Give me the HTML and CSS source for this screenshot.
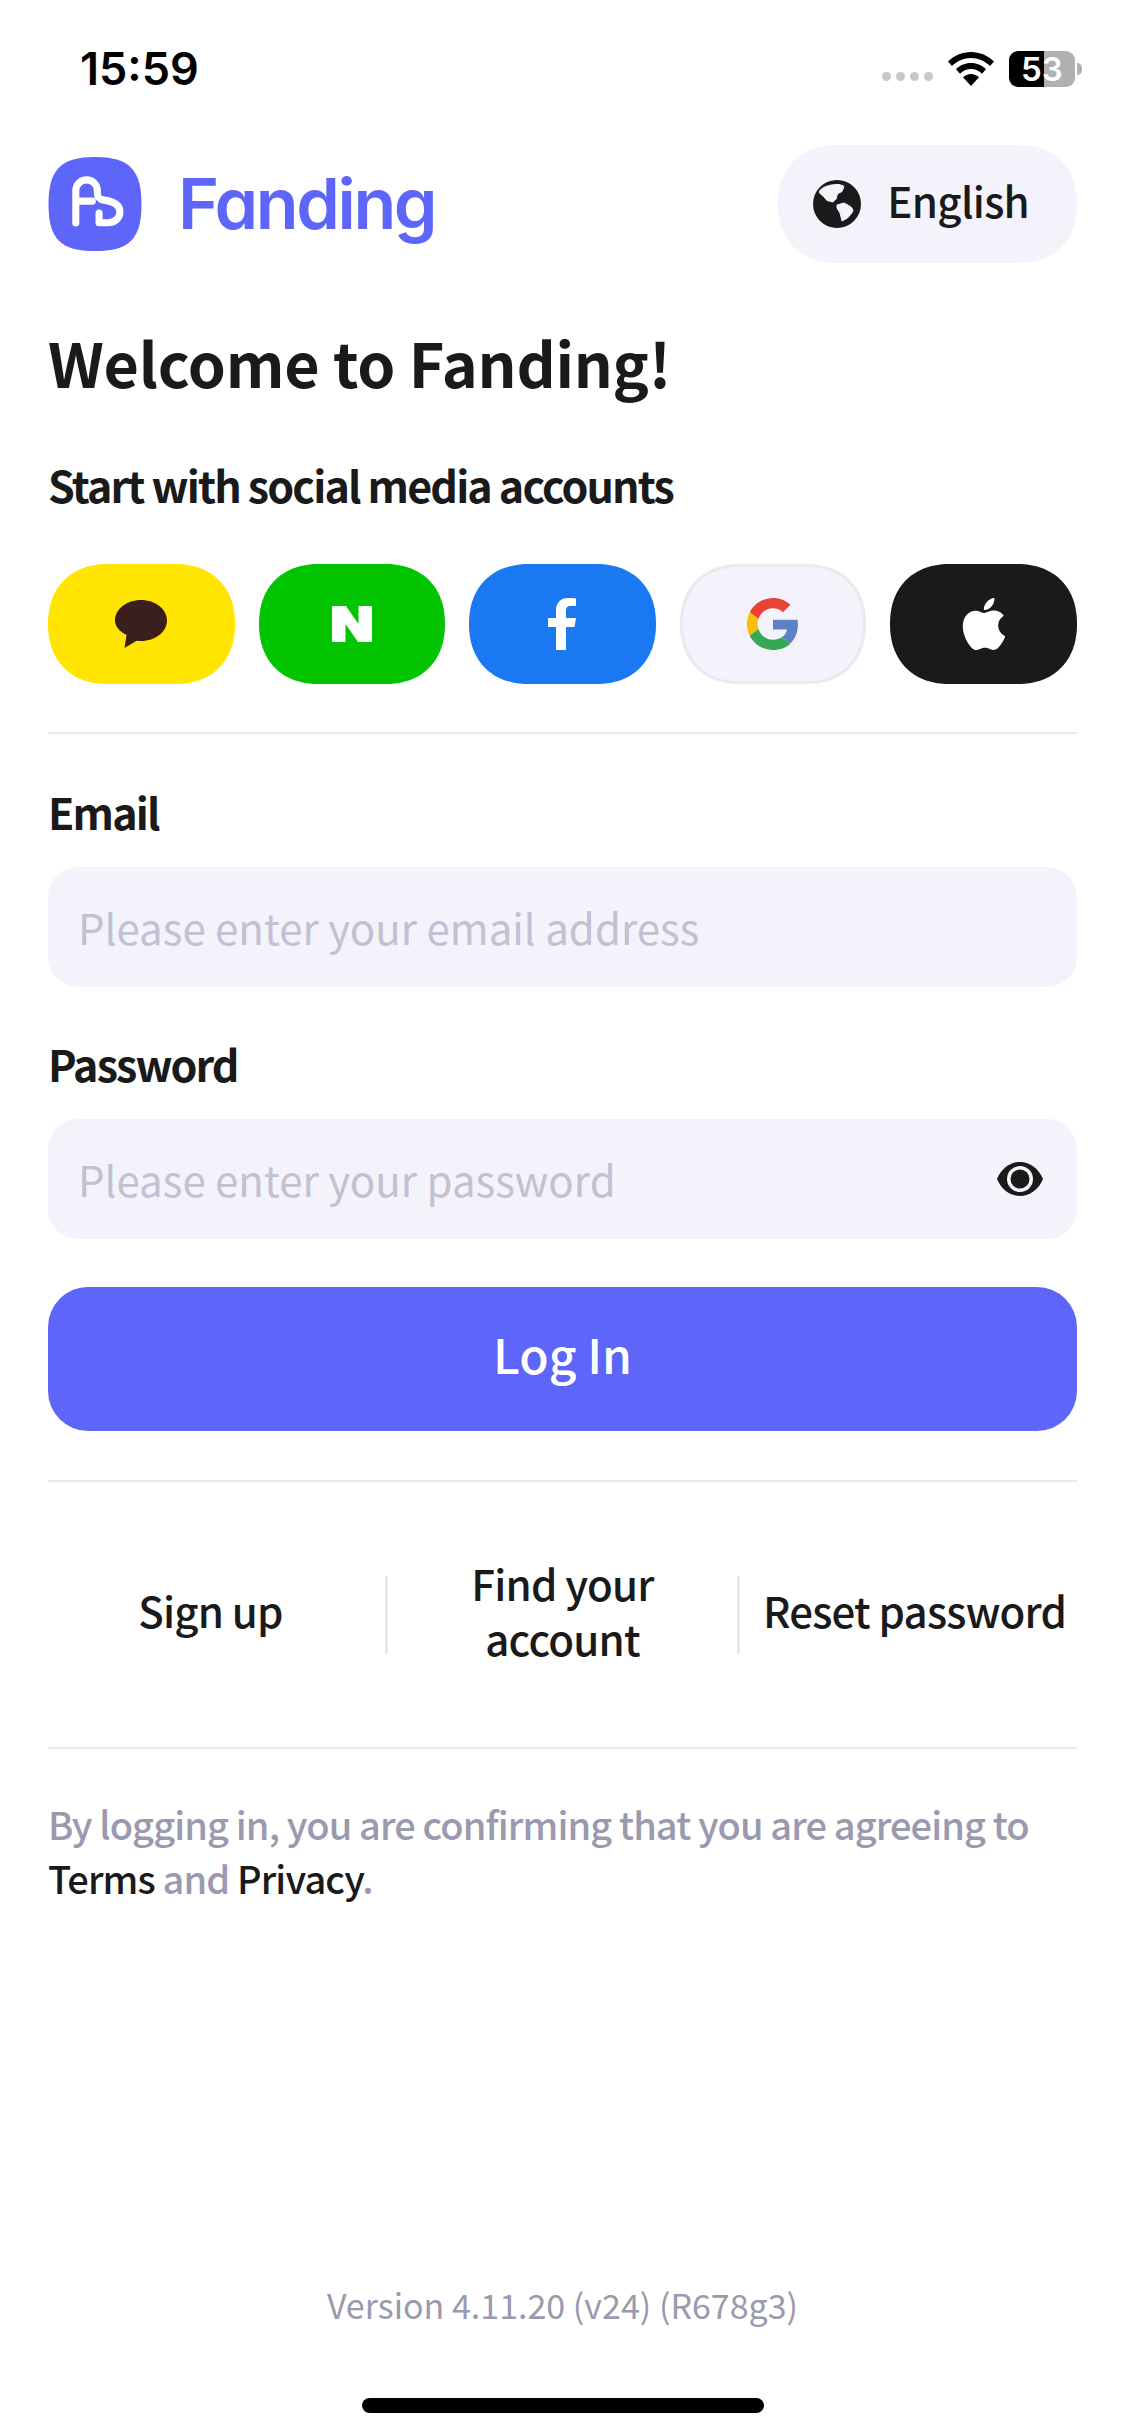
FILE: index.html
```html
<!DOCTYPE html>
<html lang="en">
<head>
    <meta charset="UTF-8">
    <meta name="viewport" content="width=device-width, initial-scale=1.0">
    <title>Fanding</title>
    <link rel="stylesheet" href="styles.css">
</head>
<body>

<div class="screen">
    <div class="status-bar">
        <span class="time">15:59</span>
        <div class="status-icons">
            <div class="signal"><i></i><i></i><i></i><i></i></div>
            <svg class="wifi" viewBox="0 0 46 34"><path d="M23 0C14 0 6 3.600 0 9.500l4 4.500C9 9 15.700 6 23 6s14 3 19 8l4-4.500C40 3.600 32 0 23 0z"/><path d="M23 11c-6 0-11.300 2.400-15 6.200l4 4.500C14.800 18.800 18.700 17 23 17s8.200 1.800 11 4.700l4-4.500C34.300 13.400 29 11 23 11z"/><path d="M23 22c-3.200 0-6 1.300-8 3.300L23 34l8-8.700C29 23.300 26.200 22 23 22z"/></svg>
            <div class="battery">53</div>
            <div class="battery-nub"></div>
        </div>
    </div>

    <div class="topbar">
        <div class="brand">
            <svg class="brand-mark" viewBox="60 52 276 279">
                <path fill="#5e65f9" d="M198 52C300 52 336 90 336 192C336 295 300 331 198 331C96 331 60 295 60 192C60 90 96 52 198 52Z"/>
                <path fill="none" stroke="#fff" stroke-width="21" stroke-linecap="round" stroke-linejoin="round" d="M141 248V152A32 32 0 0 1 205 152V160C205 172 212 178 226 180C254 184 272 196 272 215C272 234 256 247 236 247H210V218M141 183H190"/>
            </svg>
            <span class="brand-name">Fanding</span>
        </div>
        <div class="lang-button">
            <svg class="globe" viewBox="0 0 48 48">
                <circle cx="24" cy="24" r="24" fill="#1a1a1a"/>
                <path fill="#f4f3fc" stroke="#f4f3fc" stroke-width="1" stroke-linejoin="round" d="M6.500 11C8 9 10.500 7.500 13 6.500C17 5 22 4.200 26 4.500C28 5 30 5.500 31 6.500L29 11.500L25 13.500C23.500 15 24 17.500 23 19L20 22L14 20.500L10.500 16.500L6.500 13zM24 25L31 23C34 24.500 37 26 39 28L40 31C38.500 33.500 36.500 36 34.500 38L29 41C28 38.500 28 35.500 27 33L24 28z"/>
            </svg>
            <span class="lang-label">English</span>
        </div>
    </div>

    <div class="content">
        <h1 class="title">Welcome to Fanding!</h1>
        <h2 class="subtitle">Start with social media accounts</h2>

        <div class="social-row">
            <div class="social kakao">
                <svg width="52" height="48" viewBox="0 0 52 48"><path fill="#3b1e1e" d="M26 0c14.400 0 26 9.200 26 20.500S40.400 41 26 41c-1.500 0-3-.1-4.400-.3L9.500 48l2-13C4.500 31.500 0 26.300 0 20.500 0 9.200 11.600 0 26 0z"/></svg>
            </div>
            <div class="social naver">
                <svg width="40" height="36" viewBox="0 0 40 36"><path fill="#fff" d="M0 0h14l12.500 18V0H40v36H26L13.500 18v18H0z"/></svg>
            </div>
            <div class="social facebook">
                <svg width="28" height="52" viewBox="0 0 28 52"><path fill="#fff" d="M8 52V29H0v-9h8v-7C8 4 13 0 20 0c3 0 6 0 8 .4V8h-5c-4 0-5 2-5 5v7h10l-1.500 9H18v23z"/></svg>
            </div>
            <div class="social google">
                <svg width="52" height="52" viewBox="0 0 48 48">
                    <path fill="#ea4335" d="M24 9.500c3.540 0 6.710 1.220 9.210 3.600l6.850-6.850C35.900 2.380 30.470 0 24 0 14.620 0 6.510 5.380 2.560 13.220l7.980 6.190C12.430 13.720 17.740 9.500 24 9.500z"/>
                    <path fill="#5b82c6" d="M46.980 24.550c0-1.570-.15-3.090-.38-4.550H24v9.020h12.940c-.58 2.960-2.260 5.480-4.780 7.180l7.730 6c4.510-4.180 7.090-10.360 7.090-17.650z"/>
                    <path fill="#fbbc05" d="M10.530 28.590c-.48-1.450-.76-2.990-.76-4.590s.27-3.140.76-4.590l-7.980-6.190C.92 16.460 0 20.120 0 24c0 3.880.92 7.540 2.560 10.780l7.970-6.190z"/>
                    <path fill="#34a853" d="M24 48c6.480 0 11.930-2.130 15.890-5.810l-7.730-6c-2.150 1.450-4.920 2.300-8.160 2.300-6.260 0-11.570-4.220-13.470-9.910l-7.980 6.190C6.510 42.620 14.620 48 24 48z"/>
                </svg>
            </div>
            <div class="social apple">
                <svg width="52" height="52" viewBox="0 0 24 24"><path fill="#fff" d="M12.152 6.896c-.948 0-2.415-1.078-3.960-1.040-2.040.027-3.910 1.183-4.961 3.014-2.117 3.675-.546 9.103 1.519 12.090 1.013 1.454 2.208 3.090 3.792 3.039 1.520-.065 2.090-.987 3.935-.987 1.831 0 2.350.987 3.960.948 1.637-.026 2.676-1.480 3.676-2.948 1.156-1.688 1.636-3.325 1.662-3.415-.039-.013-3.182-1.221-3.220-4.857-.026-3.040 2.480-4.494 2.597-4.559-1.429-2.090-3.623-2.324-4.390-2.376-2-.156-3.675 1.090-4.610 1.090zM15.530 3.830c.843-1.012 1.400-2.427 1.245-3.830-1.207.052-2.662.805-3.532 1.818-.780.896-1.454 2.338-1.273 3.714 1.338.104 2.715-.688 3.559-1.701"/></svg>
            </div>
        </div>

        <hr class="rule rule-social">

        <label class="field-label">Email</label>
        <div class="field">
            <input type="text" placeholder="Please enter your email address">
        </div>

        <label class="field-label field-label-second">Password</label>
        <div class="field">
            <input type="password" placeholder="Please enter your password">
            <svg class="eye" viewBox="0 0 46 34">
                <path fill="#1a1a1a" d="M23 0C33 0 42 7 46 17 42 27 33 34 23 34S4 27 0 17C4 7 13 0 23 0z"/>
                <circle cx="23" cy="17" r="13" fill="#f4f3fc"/>
                <circle cx="23" cy="17" r="9.500" fill="#1a1a1a"/>
            </svg>
        </div>

        <div class="login-button">Log In</div>

        <hr class="rule rule-login">

        <div class="links">
            <div class="link">Sign up</div>
            <div class="link-sep"></div>
            <div class="link">Find your account</div>
            <div class="link-sep"></div>
            <div class="link">Reset password</div>
        </div>

        <hr class="rule rule-links">

        <p class="legal">By logging in, you are confirming that you are agreeing to <span class="legal-link">Terms</span> and <span class="legal-link">Privacy</span>.</p>
    </div>

    <div class="version">Version 4.11.20 (v24) (R678g3)</div>
    <div class="home-indicator"></div>
</div>

</body>
</html>
```
FILE: styles.css
```css
* {
    box-sizing: border-box;
}
body {
    margin: 0;
    background-color: #fff;
    color: #1a1a1a;
    font-family: "Noto Sans CJK KR", "Noto Sans", sans-serif;
}
.screen {
    display: flex;
    flex-direction: column;
    width: 1125px;
    height: 2436px;
    overflow: hidden;
}

/* status bar */
.status-bar {
    display: flex;
    justify-content: space-between;
    align-items: center;
    height: 51px;
    margin-top: 43px;
    margin-bottom: 51px;
    padding: 0 43px 0 80px;
}
.time {
    font-family: Inter, sans-serif;
    font-size: 45px;
    font-weight: 600;
    color: #000;
    line-height: 1;
}
.status-icons {
    display: flex;
    align-items: center;
}
.signal {
    display: flex;
    gap: 5px;
    align-self: flex-end;
    margin: 0 15px 6px 0;
}
.signal i {
    width: 9px;
    height: 9px;
    border-radius: 50%;
    background-color: #c8c8c8;
}
.wifi {
    width: 46px;
    height: 34px;
    margin-right: 15px;
}
.battery {
    width: 66px;
    height: 36px;
    padding-left: 12px;
    border-radius: 9px;
    background: linear-gradient(90deg, #000 53%, #b0b0b0 53%);
    color: #fff;
    font-family: Inter, sans-serif;
    font-size: 33px;
    font-weight: 600;
    line-height: 36px;
}
.battery-nub {
    width: 5px;
    height: 12px;
    margin-left: 2px;
    border-radius: 0 6px 6px 0;
    background-color: #b0b0b0;
}

/* logo and language */
.topbar {
    display: flex;
    justify-content: space-between;
    align-items: center;
    padding: 0 48px;
}
.brand {
    display: flex;
    align-items: center;
    gap: 36px;
}
.brand-mark {
    width: 94px;
    height: 94px;
    display: block;
}
.brand-name {
    font-family: Inter, sans-serif;
    font-feature-settings: "cv11";
    font-size: 70px;
    font-weight: 600;
    letter-spacing: -2.4px;
    color: #5e65f9;
    line-height: 1;
}
.lang-button {
    display: flex;
    align-items: center;
    gap: 26px;
    height: 118px;
    padding: 0 48px 0 35px;
    border-radius: 59px;
    corner-shape: superellipse(1.15);
    background-color: #f4f3fc;
    font-size: 42px;
    font-weight: 500;
    letter-spacing: -0.7px;
}
.lang-label {
    padding-bottom: 9px;
}
.globe {
    width: 48px;
    height: 48px;
}

.content {
    padding: 0 48px;
}
.title {
    margin: 54px 0 0;
    font-size: 61px;
    font-weight: 700;
    letter-spacing: -0.25px;
    line-height: 90px;
}
.subtitle {
    margin: 46px 0 0;
    font-size: 43px;
    font-weight: 700;
    letter-spacing: -1.85px;
    line-height: 62px;
}

/* social buttons */
.social-row {
    display: grid;
    grid-template-columns: repeat(5, 1fr);
    gap: 24px;
    margin-top: 49px;
}
.social {
    display: flex;
    justify-content: center;
    align-items: center;
    height: 120px;
    border-radius: 60px;
    corner-shape: superellipse(1.15);
}
.kakao {
    background-color: #ffe500;
}
.naver {
    background-color: #03c400;
}
.facebook {
    background-color: #1a78f2;
}
.google {
    background-color: #f4f3fc;
    border: 3px solid #e9e9f0;
}
.apple {
    background-color: #1a1a1a;
}

.rule {
    height: 2px;
    margin: 0;
    border: 0;
    background-color: #e8e8ee;
}
.rule-social {
    margin-top: 48px;
}

/* form */
.field-label {
    display: block;
    margin-top: 46px;
    font-size: 43px;
    font-weight: 700;
    letter-spacing: -1.85px;
    line-height: 62px;
}
.field-label-second {
    margin-top: 45px;
}
.field {
    display: flex;
    align-items: center;
    height: 120px;
    margin-top: 25px;
    padding: 0 34px 0 30px;
    border-radius: 30px;
    background-color: #f4f3fc;
}
.field input {
    flex: 1;
    min-width: 0;
    border: 0;
    outline: 0;
    padding: 0 0 2px;
    background: none;
    font-family: inherit;
    font-size: 42px;
    font-weight: 400;
}
.field input::placeholder {
    color: #c2c1d3;
    opacity: 1;
}
.eye {
    width: 46px;
    height: 34px;
}
.login-button {
    height: 144px;
    margin-top: 48px;
    border-radius: 40px;
    background-color: #5e65f9;
    color: #fff;
    font-size: 48px;
    font-weight: 500;
    line-height: 132px;
    text-align: center;
}
.rule-login {
    margin-top: 49px;
}

/* links under the form */
.links {
    display: flex;
    align-items: center;
    height: 265px;
}
.link {
    flex: 1;
    padding-bottom: 10px;
    font-size: 42px;
    font-weight: 500;
    letter-spacing: -0.8px;
    line-height: 55px;
    text-align: center;
}
.link-sep {
    width: 3px;
    height: 78px;
    margin: 0 12px;
    background-color: #e8e8f0;
}

.legal {
    margin: 48px 0 0;
    color: #9a99ae;
    font-size: 38px;
    font-weight: 500;
    letter-spacing: -0.9px;
    line-height: 54px;
}
.legal-link {
    color: #1a1a1a;
}

.version {
    margin-top: auto;
    color: #9a99ae;
    font-size: 34px;
    line-height: 50px;
    text-align: center;
}
.home-indicator {
    width: 402px;
    height: 15px;
    margin: 68px auto 23px;
    border-radius: 8px;
    background-color: #000;
}
```
